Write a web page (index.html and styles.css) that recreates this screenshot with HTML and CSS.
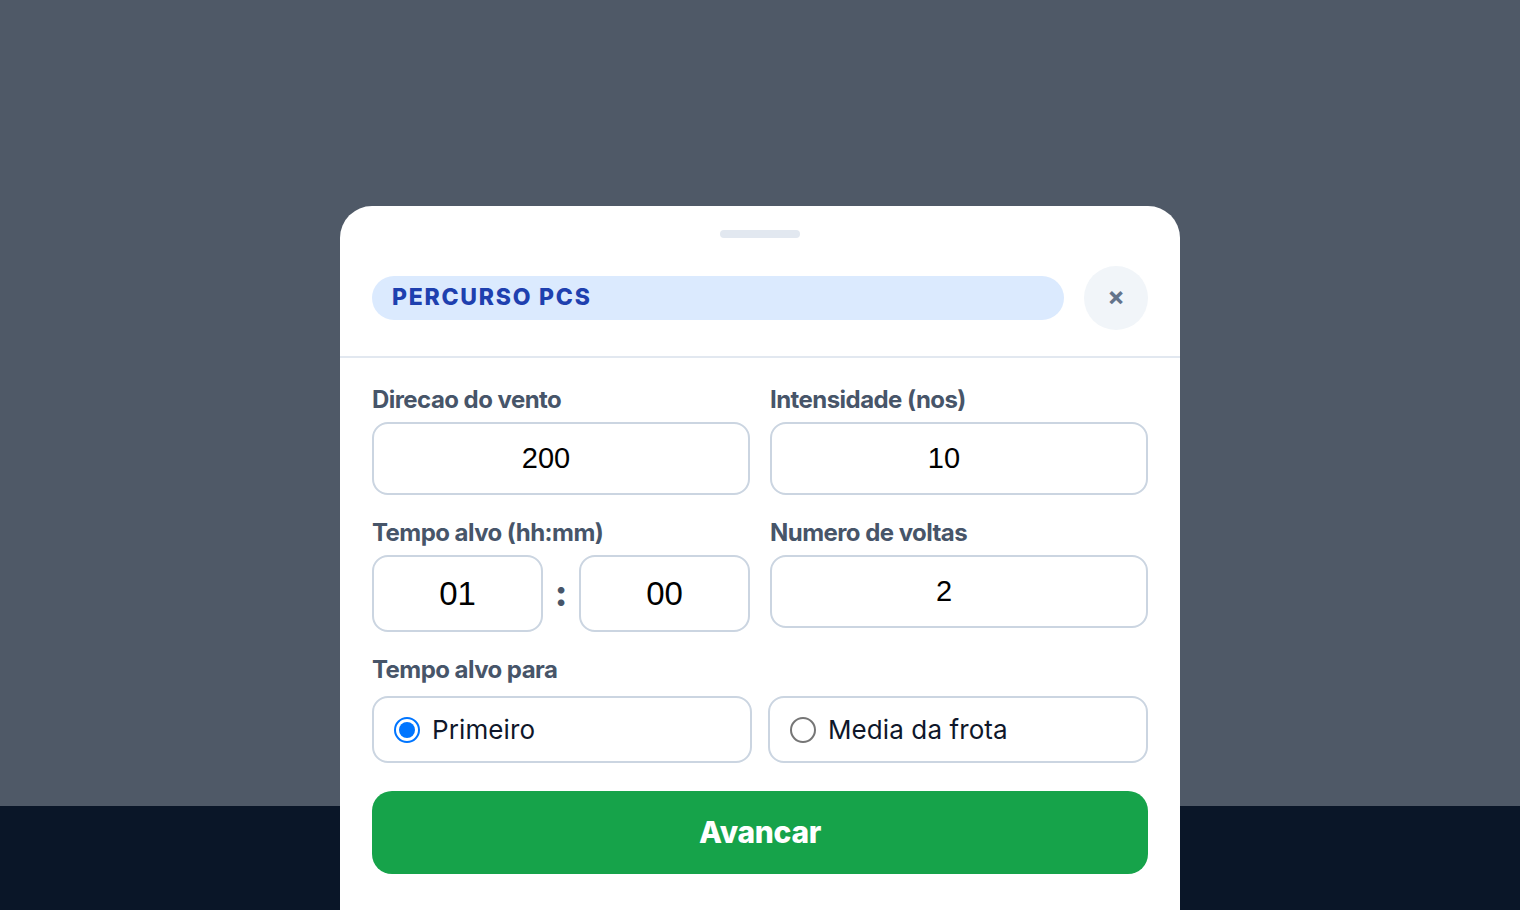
FILE: index.html
```html
<!DOCTYPE html>
<html lang="en">
<head>
  <meta charset="UTF-8" />
  <meta name="viewport" content="width=device-width, initial-scale=1.0"/>
  <title>Percurso PCS</title>
  <link rel="stylesheet" href="styles.css">
</head>
<body>
  <div class="page-top"></div>
  <div class="page-bottom"></div>

  <div class="overlay">
    <div class="sheet">
      <div class="handle"></div>

      <div class="sheet-header">
        <h2 class="course-pill">PERCURSO PCS</h2>
        <button class="close-btn" type="button">×</button>
      </div>

      <form class="sheet-form">
        <div class="field-grid">
          <div class="field">
            <label for="wind-dir">Direcao do vento</label>
            <input id="wind-dir" class="num-input" type="text" value="200" />
          </div>
          <div class="field">
            <label for="wind-speed">Intensidade (nos)</label>
            <input id="wind-speed" class="num-input" type="text" value="10" />
          </div>
          <div class="field">
            <label for="hours">Tempo alvo (hh:mm)</label>
            <div class="time-row">
              <input id="hours" class="time-input" type="text" value="01" />
              <span class="time-sep">:</span>
              <input id="minutes" class="time-input" type="text" value="00" />
            </div>
          </div>
          <div class="field">
            <label for="laps">Numero de voltas</label>
            <input id="laps" class="num-input" type="text" value="2" />
          </div>
        </div>

        <div class="target-group">
          <span class="group-label">Tempo alvo para</span>
          <div class="radio-row">
            <label class="radio-card">
              <input type="radio" name="target" checked />
              <span>Primeiro</span>
            </label>
            <label class="radio-card">
              <input type="radio" name="target" />
              <span>Media da frota</span>
            </label>
          </div>
        </div>

        <button class="next-btn" type="submit">Avancar</button>
      </form>
    </div>
  </div>
</body>
</html>
```

FILE: styles.css
```css
* {
  margin: 0;
  padding: 0;
  box-sizing: border-box;
  font-family: Inter, "Liberation Sans", sans-serif;
}

html,
body {
  height: 100%;
  overflow: hidden;
}

body {
  display: flex;
  flex-direction: column;
}

.page-top {
  flex: 1;
  background-color: #4f5967;
}

.page-bottom {
  height: 104px;
  background-color: #0a1628;
}

.overlay {
  position: fixed;
  top: 206px;
  left: 0;
  right: 0;
  bottom: 0;
  display: flex;
  justify-content: center;
}

.sheet {
  width: 840px;
  background-color: white;
  border-radius: 32px 32px 0 0;
  padding-top: 24px;
}

.handle {
  width: 80px;
  height: 8px;
  margin: 0 auto 28px;
  background-color: #e2e8f0;
  border-radius: 4px;
}

.sheet-header {
  display: flex;
  align-items: center;
  gap: 20px;
  padding: 0 32px 26px;
  border-bottom: 2px solid #e2e8f0;
}

.course-pill {
  flex: 1;
  height: 44px;
  padding: 0 20px 2px;
  display: flex;
  align-items: center;
  background-color: #dbeafe;
  border-radius: 22px;
  color: #1e40af;
  font-size: 23px;
  font-weight: 800;
  letter-spacing: 1.75px;
}

.close-btn {
  width: 64px;
  height: 64px;
  padding-bottom: 4px;
  border: none;
  border-radius: 50%;
  background-color: #f1f5f9;
  color: #64748b;
  font-size: 26px;
  font-weight: 700;
}

.sheet-form {
  padding: 28px 32px 0;
}

.field-grid {
  display: grid;
  grid-template-columns: 378px 378px;
  column-gap: 20px;
  row-gap: 24px;
  align-items: start;
}

.field label,
.group-label {
  display: block;
  height: 28px;
  margin-bottom: 8px;
  color: #475569;
  font-size: 24px;
  font-weight: 700;
  letter-spacing: -0.55px;
  line-height: 28px;
}

.num-input,
.time-input {
  display: block;
  width: 100%;
  border: 2px solid #cbd5e1;
  border-radius: 16px;
  background-color: white;
  color: black;
  text-align: center;
  font-family: "Liberation Sans", Arial, sans-serif;
}

.num-input {
  height: 73px;
  padding-right: 30px;
  font-size: 29px;
}

.time-row {
  display: flex;
  align-items: center;
  gap: 8px;
}

.time-input {
  flex: 1;
  min-width: 0;
  height: 77px;
  font-size: 33px;
}

.time-sep {
  width: 20px;
  padding-bottom: 2px;
  text-align: center;
  color: #475569;
  font-size: 36px;
  font-weight: 800;
}

.target-group {
  margin-top: 24px;
}

.group-label {
  margin-bottom: 12px;
}

.radio-row {
  display: grid;
  grid-template-columns: 380px 380px;
  column-gap: 16px;
}

.radio-card {
  height: 67px;
  padding: 0 20px;
  display: flex;
  align-items: center;
  gap: 12px;
  border: 2px solid #cbd5e1;
  border-radius: 16px;
  color: #0f172a;
  font-size: 26px;
  letter-spacing: 0.1px;
}

.radio-card input {
  appearance: none;
  width: 26px;
  height: 26px;
  border: 2px solid #767676;
  border-radius: 50%;
  background-color: white;
}

.radio-card input:checked {
  border: 2.5px solid #0075ff;
  padding: 3px;
  background-color: #0075ff;
  background-clip: content-box;
}

.next-btn {
  display: block;
  width: 100%;
  height: 83px;
  margin-top: 28px;
  padding-bottom: 2px;
  border: none;
  border-radius: 20px;
  background-color: #16a34a;
  color: white;
  font-size: 30px;
  font-weight: 800;
  letter-spacing: -0.3px;
}
```
